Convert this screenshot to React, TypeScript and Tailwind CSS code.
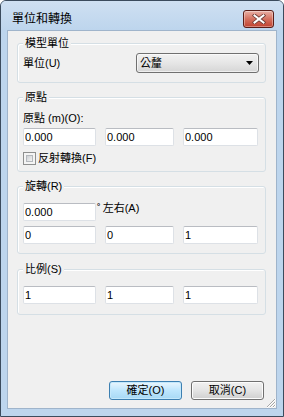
import React from 'react';

const ui = "font-['Liberation_Sans','Noto_Sans_CJK_TC',sans-serif]";

function Group({ title, className, children }: { title: string; className?: string; children: React.ReactNode }) {
  return (
    <div className={`relative ml-[9px] mr-[10px] rounded-[3px] border border-[#d5dfe5] shadow-[inset_1px_1px_0_#ffffff] ${className ?? ''}`}>
      <span className="absolute left-[5px] top-[-8px] bg-[#f0f0f0] px-[2px] text-[11px] leading-[14px] text-black">{title}</span>
      {children}
    </div>
  );
}

function Field({ value, w }: { value: string; w: string }) {
  return (
    <input
      readOnly
      value={value}
      className={`${w} h-[18px] rounded-[2px] border border-[#dde1e6] border-t-[#b9bcc2] bg-white pl-[1px] text-[11px] leading-[16px] text-black outline-none`}
    />
  );
}

function Row3({ values }: { values: string[] }) {
  return (
    <div className="flex">
      <Field value={values[0]} w="w-[73px]" />
      <div className="ml-[9px]">
        <Field value={values[1]} w="w-[69px]" />
      </div>
      <div className="ml-[9px]">
        <Field value={values[2]} w="w-[75px]" />
      </div>
    </div>
  );
}

function CloseButton() {
  return (
    <div className="flex h-[18px] w-[31px] items-center justify-center rounded-[3px] border border-[#5a1d17] bg-gradient-to-b from-[#e8b0a6] via-[#d4705f] to-[#c0402e] shadow-[inset_0_0_0_1px_rgba(255,255,255,0.35)]">
      <svg width="14" height="10" viewBox="0 0 14 10">
        <path d="M2.5 1.5 L11.5 8.5 M11.5 1.5 L2.5 8.5" stroke="#6b3a34" strokeWidth="3.6" strokeLinecap="square" />
        <path d="M2.5 1.5 L11.5 8.5 M11.5 1.5 L2.5 8.5" stroke="#ffffff" strokeWidth="2" strokeLinecap="square" />
      </svg>
    </div>
  );
}

function Grip() {
  return (
    <svg width="11" height="11" viewBox="0 0 11 11" className="absolute bottom-0 right-0">
      <path d="M10 2 L2 10 M10 5 L5 10 M10 8 L8 10" stroke="#a7a7a7" strokeWidth="1" />
      <path d="M11 2 L2 11 M11 5 L5 11 M11 8 L8 11" stroke="#ffffff" strokeWidth="1" />
    </svg>
  );
}

export default function App() {
  return (
    <div className={`h-[417px] w-[284px] ${ui}`}>
      <div className="flex h-full flex-col rounded-t-[6px] border border-[#3b4b5d] bg-[#bdd5ed]">
        {/* Title bar */}
        <div className="flex h-[29px] shrink-0 items-center rounded-t-[5px] bg-gradient-to-b from-[#cfe0f2] to-[#bdd5ed] pl-[11px] pr-[9px] pt-[6px]">
          <span className="flex-1 text-[12px] leading-[14px] text-black">單位和轉換</span>
          <CloseButton />
        </div>

        {/* Client */}
        <div className="relative mx-[6px] mb-[7px] flex flex-1 flex-col border border-[#9fb4cb] bg-[#f0f0f0] text-[11px] text-black">
          <Group title="模型單位" className="mt-[12px] pb-[9px] pl-[5px] pr-[6px] pt-[9px]">
            <div className="flex items-center justify-between">
              <span className="leading-[13px]">單位(U)</span>
              <div className="flex h-[20px] w-[123px] items-center justify-between rounded-[3px] border border-[#707070] bg-gradient-to-b from-[#f2f2f2] via-[#e6e6e6] to-[#d6d6d6] pl-[3px] pr-[5px] shadow-[inset_0_0_0_1px_rgba(255,255,255,0.6)]">
                <span className="leading-[13px]">公釐</span>
                <svg width="7" height="4" viewBox="0 0 7 4">
                  <path d="M0 0 H7 L3.5 4 Z" fill="#000000" />
                </svg>
              </div>
            </div>
          </Group>

          <Group title="原點" className="mt-[14px] pb-[6px] pl-[5px] pr-[6px] pt-[14px]">
            <div className="h-[13px] leading-[13px]">原點 (m)(O):</div>
            <div className="mt-[3px]">
              <Row3 values={['0.000', '0.000', '0.000']} />
            </div>
            <div className="mt-[6px] flex items-center">
              <div className="h-[13px] w-[13px] border border-[#8e8f8f] bg-[#f4f4f4] p-[2px]">
                <div className="h-full w-full border border-[#b4b8bd] bg-gradient-to-br from-[#cdd0d4] to-[#f3f3f3]" />
              </div>
              <span className="ml-[2px] leading-[13px]">反射轉換(F)</span>
            </div>
          </Group>

          <Group title="旋轉(R)" className="mt-[14px] pb-[9px] pl-[5px] pr-[6px] pt-[16px]">
            <div className="flex items-start">
              <Field value="0.000" w="w-[73px]" />
              <span className="ml-[1px] leading-[10px]">˚</span>
              <span className="ml-[2px] leading-[11px]">左右(A)</span>
            </div>
            <div className="mt-[5px]">
              <Row3 values={['0', '0', '1']} />
            </div>
          </Group>

          <Group title="比例(S)" className="mt-[15px] pb-[10px] pl-[5px] pr-[6px] pt-[16px]">
            <Row3 values={['1', '1', '1']} />
          </Group>

          <div className="flex-1" />

          <div className="mb-[8px] mr-[12px] flex justify-end gap-[9px]">
            <button className="h-[19px] w-[73px] rounded-[3px] border border-[#3c7fb1] bg-gradient-to-b from-[#eaf6fd] via-[#bee6fd] to-[#a7d9f5] text-[11px] leading-[15px] text-black shadow-[inset_0_0_0_1px_#c4e8fb]">
              確定(O)
            </button>
            <button className="h-[19px] w-[73px] rounded-[3px] border border-[#707070] bg-gradient-to-b from-[#f2f2f2] via-[#e4e4e4] to-[#cfcfcf] text-[11px] leading-[15px] text-black shadow-[inset_0_0_0_1px_#fcfcfc]">
              取消(C)
            </button>
          </div>

          <Grip />
        </div>
      </div>
    </div>
  );
}
